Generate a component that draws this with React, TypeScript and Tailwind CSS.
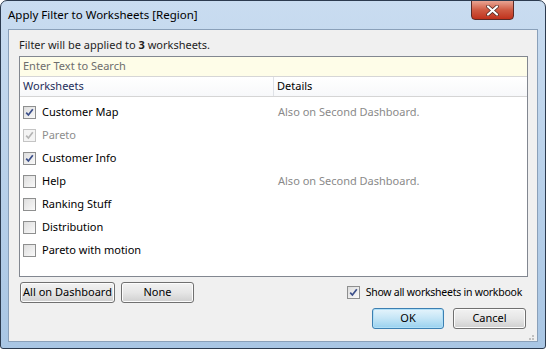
import React from "react";

const rows = [
  { name: "Customer Map", checked: true, details: "Also on Second Dashboard." },
  { name: "Pareto", checked: true, disabled: true, details: "" },
  { name: "Customer Info", checked: true, details: "" },
  { name: "Help", checked: false, details: "Also on Second Dashboard." },
  { name: "Ranking Stuff", checked: false, details: "" },
  { name: "Distribution", checked: false, details: "" },
  { name: "Pareto with motion", checked: false, details: "" },
];

function CheckBox({ checked, disabled }: { checked: boolean; disabled?: boolean }) {
  return (
    <div
      className={`w-[13px] h-[13px] border shrink-0 flex items-center justify-center ${
        disabled ? "border-[#c4c4c4] bg-[#f4f4f4]" : "border-[#8e8f8f] bg-gradient-to-br from-[#dcdcdc] to-[#fbfbfb]"
      }`}
    >
      <div className={`w-[9px] h-[9px] flex items-center justify-center ${disabled ? "" : "bg-gradient-to-br from-[#e1e1e1] to-[#f6f6f6]"}`}>
        {checked && (
          <svg width="9" height="9" viewBox="0 0 9 9">
            <path
              d="M1.2 4.6 L3.4 7 L7.8 1.3"
              fill="none"
              stroke={disabled ? "#b4b4b4" : "#3b4f8a"}
              strokeWidth="1.7"
            />
          </svg>
        )}
      </div>
    </div>
  );
}

function Button({ label, w, focused }: { label: string; w: string; focused?: boolean }) {
  return (
    <div
      className={`${w} h-[21px] rounded-[3px] border flex items-center justify-center whitespace-nowrap text-[11px] text-black ${
        focused
          ? "border-[#3c7fb1] bg-gradient-to-b from-[#e5f4fc] via-[#c4e5f6] to-[#98d1ef] shadow-[inset_0_0_0_1px_#b0dff7]"
          : "border-[#707070] bg-gradient-to-b from-[#f2f2f2] via-[#e6e6e6] to-[#cfcfcf] shadow-[inset_0_0_0_1px_#fcfcfc]"
      }`}
    >
      {label}
    </div>
  );
}

export default function App() {
  return (
    <div className="w-[546px] h-[349px] bg-white" style={{ fontFamily: '"Segoe UI", "Noto Sans", sans-serif' }}>
      <div className="w-[546px] h-[349px] rounded-t-[7px] rounded-b-[3px] border border-[#2c3b4f] bg-gradient-to-b from-[#c9dcf0] via-[#b9d1ea] to-[#a9c6e4] flex flex-col relative overflow-hidden">
        {/* title bar */}
        <div className="h-[28px] flex items-center pl-[7px] text-[11.5px] text-black shrink-0">
          Apply Filter to Worksheets [Region]
        </div>
        <div className="absolute right-[31px] top-[-1px] w-[43px] h-[20px] rounded-b-[4px] border border-[#5b2a26] bg-gradient-to-b from-[#e8a493] via-[#cf5a42] to-[#c0301a] flex items-center justify-center">
          <svg width="13" height="11" viewBox="0 0 13 11">
            <path d="M2 1.5 L11 9.5 M11 1.5 L2 9.5" stroke="#4a2620" strokeWidth="3.6" strokeLinecap="round" />
            <path d="M2 1.5 L11 9.5 M11 1.5 L2 9.5" stroke="#ffffff" strokeWidth="2.2" strokeLinecap="round" />
          </svg>
        </div>

        {/* client area */}
        <div className="mx-[7px] mb-[6px] flex-1 border border-[#8aa0b9] bg-[#f0f0f0] flex flex-col pl-[10px] pr-[9px] text-[11px] text-[#1e1e1e]">
          <div className="h-[26px] flex items-end pb-[3px]">
            <span>
              Filter will be applied to <b className="font-bold">3</b> worksheets.
            </span>
          </div>

          {/* list */}
          <div className="h-[221px] border border-[#828790] bg-white flex flex-col">
            <div className="h-[20px] bg-[#fefde8] border-b border-[#d6d6d6] flex items-center px-[3px] text-[#6d6d6d]">
              Enter Text to Search
            </div>
            <div className="h-[20px] flex border-b border-[#d5d5d5] bg-gradient-to-b from-white to-[#f7f8fa] text-[#1e2e5b]">
              <div className="w-[254px] border-r border-[#dfe2e7] flex items-center pl-[3px]">Worksheets</div>
              <div className="flex-1 flex items-center pl-[3px] text-black">Details</div>
            </div>
            <div className="flex flex-col pt-[4px]">
              {rows.map((r) => (
                <div key={r.name} className="h-[23px] flex items-center">
                  <div className="w-[254px] flex items-center gap-[6px] pl-[3px]">
                    <CheckBox checked={r.checked} disabled={r.disabled} />
                    <span className={r.disabled ? "text-[#8d8d8d]" : "text-black"}>{r.name}</span>
                  </div>
                  <div className="flex-1 pl-[4px] text-[#8a8a8a]">{r.details}</div>
                </div>
              ))}
            </div>
          </div>

          {/* bottom rows */}
          <div className="flex items-center mt-[5px] h-[21px]">
            <div className="flex gap-[6px] pl-[1px]">
              <Button label="All on Dashboard" w="w-[95px]" />
              <Button label="None" w="w-[73px]" />
            </div>
            <div className="ml-auto flex items-center gap-[6px] pr-[6px]">
              <CheckBox checked />
              <span className="text-black text-[10.5px] tracking-[-0.25px]">Show all worksheets in workbook</span>
            </div>
          </div>
          <div className="flex justify-end gap-[9px] mt-[5px] pr-[2px]">
            <Button label="OK" w="w-[72px]" focused />
            <Button label="Cancel" w="w-[73px]" />
          </div>
          <div className="flex-1 relative">
            <div className="absolute right-[-6px] bottom-[1px] grid grid-cols-3 gap-[1px] w-[8px]">
              <span />
              <span />
              <span className="w-[2px] h-[2px] bg-[#c0c0c0]" />
              <span />
              <span className="w-[2px] h-[2px] bg-[#c0c0c0]" />
              <span className="w-[2px] h-[2px] bg-[#c0c0c0]" />
            </div>
          </div>
        </div>
      </div>
    </div>
  );
}
